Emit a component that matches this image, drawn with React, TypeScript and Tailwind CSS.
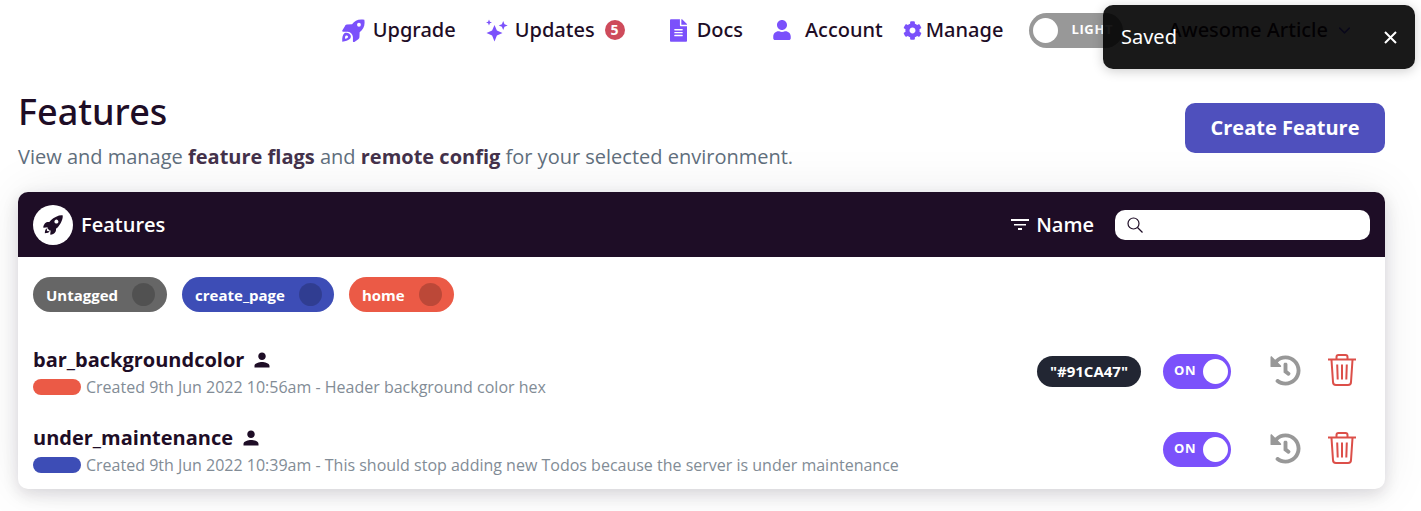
import { useState } from "react";
import type { ReactNode } from "react";
import { IoChevronDown } from "react-icons/io5";
import { IoMdPerson, IoIosRocket } from "react-icons/io";
import { FaUser, FaCog, FaFileAlt, FaHistory } from "react-icons/fa";

type Feature = { name: string; tag: string; created: string; description: string; value?: string };

const features: Feature[] = [
  { name: "bar_backgroundcolor", tag: "bg-[#eb5a46]", created: "9th Jun 2022 10:56am", description: "Header background color hex", value: '"#91CA47"' },
  { name: "under_maintenance", tag: "bg-[#3d4db6]", created: "9th Jun 2022 10:39am", description: "This should stop adding new Todos because the server is under maintenance" },
];

const tags = [
  { label: "Untagged", className: "bg-[#666666]" },
  { label: "create_page", className: "bg-[#3d4db6]" },
  { label: "home", className: "bg-[#eb5a46]" },
];

function RocketIcon() {
  return (
    <svg width="23" height="23" viewBox="0 0 24 24" fill="currentColor" fillRule="evenodd">
      <path d="M23.300 0.800C17 -0.200 13.500 1.500 10.500 5.500L5 5.700C4 6 3.500 6.500 3 7.500L0.300 12c-.3.8.2 1.200.8 1.200h5c3 .5 5 2.500 5.300 5.500v4.500c0 .8.7 1.200 1.400.9L17 21c.8-.5 1.200-1.200 1.200-2l.2-5.200C22.500 10.500 24.300 7 23.300 0.800ZM17.700 4a2 2 0 1 0 0 4a2 2 0 1 0 0-4Z" />
      <path d="M0.300 23.700c-.3-4 .2-7.500 2.500-9c2.200-1.200 5.500.2 6.300 2.500c.8 3-1.500 5.500-8.800 6.500ZM3.200 20.600c2.200-.3 3.300-1.100 3.100-2.300c-.4-1.200-1.700-1.400-2.500-.7c-.6.6-.7 1.700-.6 3Z" />
    </svg>
  );
}

function SparklesIcon() {
  return (
    <svg width="22" height="23" viewBox="0 0 22 23" fill="currentColor">
      <path d="M8.500 6L10.900 11.600L16.500 14L10.900 16.400L8.500 22.500L6.100 16.400L0.500 14L6.100 11.600Z" />
      <path d="M3 0.500L3.900 2.700L6 3.500L3.900 4.300L3 6.500L2.100 4.300L0 3.500L2.100 2.700Z" />
      <path d="M17.200 2L18.500 5.200L21.700 6.500L18.500 7.800L17.200 11L15.900 7.800L12.700 6.500L15.900 5.200Z" />
    </svg>
  );
}

function TrashIcon() {
  return (
    <svg width="28" height="32" viewBox="0 0 28 32" fill="none" stroke="currentColor" strokeWidth="2">
      <path d="M0 5.500h28" />
      <path d="M8.500 5V3a2 2 0 0 1 2-2h7a2 2 0 0 1 2 2v2" />
      <path d="M3.500 6l1.500 22a3 3 0 0 0 3 3h12a3 3 0 0 0 3-3l1.500-22" />
      <path d="M9.200 10.500l.5 15M14 10.500v15M18.800 10.500l-.5 15" />
    </svg>
  );
}

function SearchIcon() {
  return (
    <svg width="16" height="16" viewBox="0 0 16 16" fill="none" stroke="currentColor" strokeWidth="1.200" className="shrink-0">
      <circle cx="6.500" cy="6.500" r="5.500" />
      <path d="M10.500 10.500l5 5" />
    </svg>
  );
}

function NavLink({ icon, children, className }: { icon: ReactNode; children: ReactNode; className: string }) {
  return (
    <a href="#" className={"flex items-center font-['Noto_Sans','Open_Sans',sans-serif] text-[20px] leading-7 font-medium text-[#1e0d26] " + className}>
      <span className="flex shrink-0 text-[#7b51fb]">{icon}</span>
      {children}
    </a>
  );
}

function FeatureSwitch({ name }: { name: string }) {
  const [on, setOn] = useState(true);
  return (
    <label className={"flex h-[35px] w-[68px] cursor-pointer items-center justify-between rounded-full pr-[3px] pl-[11px] " + (on ? "bg-[#7b51fb]" : "flex-row-reverse bg-[#989898]")}>
      <input type="checkbox" role="switch" aria-label={name} checked={on} onChange={() => setOn(!on)} className="sr-only" />
      <span className="text-[13px] font-bold tracking-wider text-white">{on ? "ON" : "OFF"}</span>
      <span className="size-[25px] rounded-full bg-white" />
    </label>
  );
}

function Header() {
  return (
    <nav className="flex h-[60px] items-center justify-end pr-[68px]">
      <NavLink className="mr-[30px] gap-2" icon={<RocketIcon />}>Upgrade</NavLink>
      <NavLink className="mr-[45px] gap-[7px]" icon={<SparklesIcon />}>
        Updates
        <span className="ml-[3px] flex size-5 items-center justify-center rounded-full bg-[#ce4b5b] text-[14px] font-bold text-white">5</span>
      </NavLink>
      <NavLink className="mr-[30px] gap-[10px]" icon={<FaFileAlt size={23} className="w-[17px]" />}>Docs</NavLink>
      <NavLink className="mr-5 gap-[14px]" icon={<FaUser size={20} className="w-[18px]" />}>Account</NavLink>
      <NavLink className="mr-[26px] gap-1" icon={<FaCog size={19} />}>Manage</NavLink>
      <label className="mr-[45px] flex h-[35px] w-[94px] cursor-pointer items-center gap-[13px] rounded-full bg-[#989898] pl-1">
        <input type="checkbox" role="switch" aria-label="Theme" className="sr-only" />
        <span className="size-[25px] rounded-full bg-white" />
        <span className="text-[13px] font-bold tracking-wider text-white">LIGHT</span>
      </label>
      <button type="button" className="flex items-center gap-2 font-['Noto_Sans','Open_Sans',sans-serif] text-[20px] leading-7 font-medium text-[#1e0d26]">
        Awesome Article
        <IoChevronDown size={17} className="text-[#5b51ff]" />
      </button>
    </nav>
  );
}

function Toast() {
  return (
    <div role="status" className="absolute top-[5px] right-[6px] flex h-16 w-[312px] items-center justify-between rounded-[10px] bg-black/90 px-[18px] font-['Noto_Sans','Open_Sans',sans-serif] text-[20px] text-white shadow-[0_2px_12px_rgba(0,0,0,0.2)]">
      Saved
      <button type="button" aria-label="Close">
        <svg width="13" height="13" viewBox="0 0 13 13" stroke="currentColor" strokeWidth="2">
          <path d="M1 1l11 11M12 1L1 12" />
        </svg>
      </button>
    </div>
  );
}

export default function App() {
  return (
    <div className="relative min-h-screen bg-white pb-[22px] font-['Open_Sans','Noto_Sans',sans-serif] text-[#1e0d26]">
      <Header />
      <main className="pr-9 pl-[18px]">
        <div className="flex items-start justify-between pt-[30px]">
          <div>
            <h1 className="font-['Noto_Sans','Open_Sans',sans-serif] text-[36px] leading-[44px] font-medium">Features</h1>
            <p className="mt-2 text-[20px] leading-[30px] text-[#5f6e7c]">
              View and manage <strong className="font-bold text-[#43314a]">feature flags</strong> and{" "}
              <strong className="font-bold text-[#43314a]">remote config</strong> for your selected environment.
            </p>
          </div>
          <button type="button" className="mt-[13px] h-[50px] w-[200px] rounded-[10px] bg-[#4f50bd] text-[20px] font-bold text-white">Create Feature</button>
        </div>

        <section className="mt-5 rounded-[10px] bg-white shadow-[0_5px_16px_rgba(30,13,38,0.14),0_0_50px_rgba(30,13,38,0.08)]">
          <header className="flex h-[65px] items-center rounded-t-[10px] bg-[#1e0d26] px-[15px] text-white">
            <span className="flex size-10 items-center justify-center rounded-full bg-white text-[#1e0d26]"><IoIosRocket size={24} /></span>
            <h2 className="ml-2 text-[20px] font-semibold">Features</h2>
            <button type="button" className="ml-auto flex items-center gap-[7px] text-[20px] font-semibold">
              <svg width="18" height="12" viewBox="0 0 18 12" fill="currentColor">
                <path d="M0 0h18v2H0zM3 5h12v1.500H3zM7 9h4v2H7z" />
              </svg>
              Name
            </button>
            <label className="ml-[21px] flex h-[30px] w-[255px] items-center gap-2 rounded-[10px] bg-white px-3 text-[#1e0d26]">
              <SearchIcon />
              <input type="search" aria-label="Search features" className="w-full min-w-0 bg-transparent text-[16px] outline-none" />
            </label>
          </header>

          <div className="flex gap-[15px] px-[15px] pt-5">
            {tags.map((tag) => (
              <label key={tag.label} className={"flex h-[35px] cursor-pointer items-center gap-[14px] rounded-full pr-3 pl-[13px] text-[15px] font-bold text-white " + tag.className}>
                <span className="pt-0.5">{tag.label}</span>
                <input type="checkbox" className="size-[23px] appearance-none rounded-full bg-black/20" />
              </label>
            ))}
          </div>

          <ul className="pt-5 pb-px">
            {features.map((f) => (
              <li key={f.name} className="flex h-[78px] items-center px-[15px]">
                <div className="min-w-0 flex-1 pt-1">
                  <div className="flex items-center gap-2 text-[20px] leading-7 font-bold">
                    {f.name}
                    <IoMdPerson size={20} />
                  </div>
                  <div className="flex items-center gap-[5px] text-[16px] leading-[26px] text-[#828c96]">
                    <span className={"h-4 w-12 shrink-0 rounded-full " + f.tag} />
                    <span className="truncate">Created {f.created} - {f.description}</span>
                  </div>
                </div>
                {f.value && (
                  <span className="mr-[22px] flex h-[31px] items-center rounded-full bg-[#222633] px-[13px] text-[15px] font-bold text-white">{f.value}</span>
                )}
                <FeatureSwitch name={f.name} />
                <button type="button" aria-label={"History of " + f.name} className="ml-[39px] pb-0.5 text-[#989898]"><FaHistory size={31} /></button>
                <button type="button" aria-label={"Remove " + f.name} className="mr-[14px] ml-[27px] pb-0.5 text-[#dc4f49]"><TrashIcon /></button>
              </li>
            ))}
          </ul>
        </section>
      </main>
      <Toast />
    </div>
  );
}
